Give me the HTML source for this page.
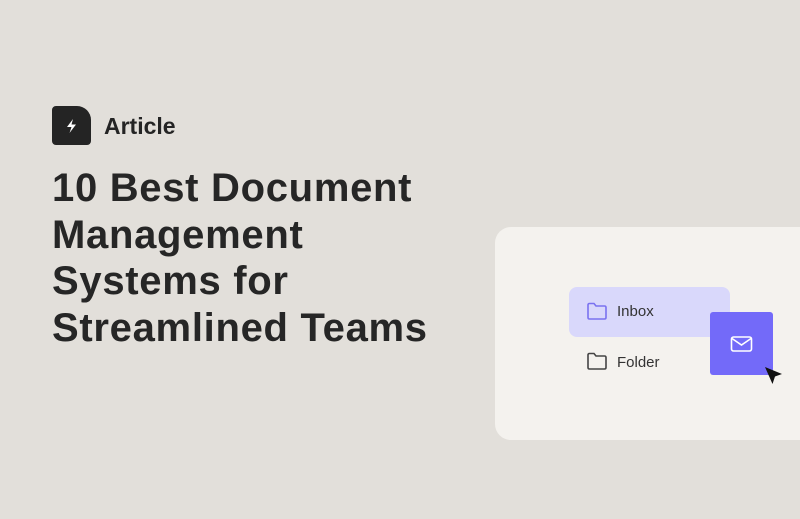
<!DOCTYPE html>
<html><head><style>
body{margin:0;width:800px;height:519px;background:#e2dfda;position:relative;overflow:hidden;font-family:"Liberation Sans",sans-serif}
.logo{position:absolute;left:52px;top:106px;width:39px;height:39px;background:#242424;border-radius:4px 14px 4px 4px}
.art{position:absolute;left:104px;top:113px;font-size:23px;font-weight:bold;color:#242424;letter-spacing:0}
h1{position:absolute;left:52px;top:165px;margin:0;font-size:40px;line-height:46.5px;font-weight:bold;color:#262626;letter-spacing:0.7px}
.card{position:absolute;left:495px;top:227px;width:330px;height:213px;background:#f4f2ee;border-radius:16px}
.pill{position:absolute;left:569px;top:287px;width:161px;height:50px;background:#d9d8fb;border-radius:8px}
.lbl{position:absolute;font-size:15px;color:#333}
.env{position:absolute;left:710px;top:312px;width:63px;height:63px;background:#736af9;border-radius:3px}
</style></head><body>
<div class="logo"><svg width="39" height="39" viewBox="0 0 39 39"><path d="M21 13 L15 21 H19.5 L17.5 27 L24 18.5 H19.5 Z" fill="#fff"/></svg></div>
<div class="art">Article</div>
<h1>10 Best Document<br>Management<br>Systems for<br>Streamlined Teams</h1>
<div class="card"></div>
<div class="pill"></div>
<svg style="position:absolute;left:586px;top:302px" width="22" height="19" viewBox="0 0 22 19"><path d="M2 3 Q2 1.5 3.5 1.5 H8 L10 4 H18.5 Q20 4 20 5.5 V15.5 Q20 17 18.5 17 H3.5 Q2 17 2 15.5 Z" fill="none" stroke="#7a72f0" stroke-width="1.6"/></svg>
<div class="lbl" style="left:617px;top:303px">Inbox</div>
<svg style="position:absolute;left:586px;top:352px" width="22" height="19" viewBox="0 0 22 19"><path d="M2 3 Q2 1.5 3.5 1.5 H8 L10 4 H18.5 Q20 4 20 5.5 V15.5 Q20 17 18.5 17 H3.5 Q2 17 2 15.5 Z" fill="none" stroke="#444" stroke-width="1.6"/></svg>
<div class="lbl" style="left:617px;top:354px">Folder</div>
<div class="env"><svg width="63" height="63" viewBox="0 0 63 63"><rect x="21.5" y="25" width="20" height="14" rx="2" fill="none" stroke="#fff" stroke-width="1.6"/><path d="M22 26.5 L31.5 33 L41 26.5" fill="none" stroke="#fff" stroke-width="1.6"/></svg></div>
<svg style="position:absolute;left:763px;top:365px" width="22" height="22" viewBox="0 0 22 22"><path d="M2 2 L19 9 L12 11.5 L9.5 19 Z" fill="#111"/></svg>
</body></html>
